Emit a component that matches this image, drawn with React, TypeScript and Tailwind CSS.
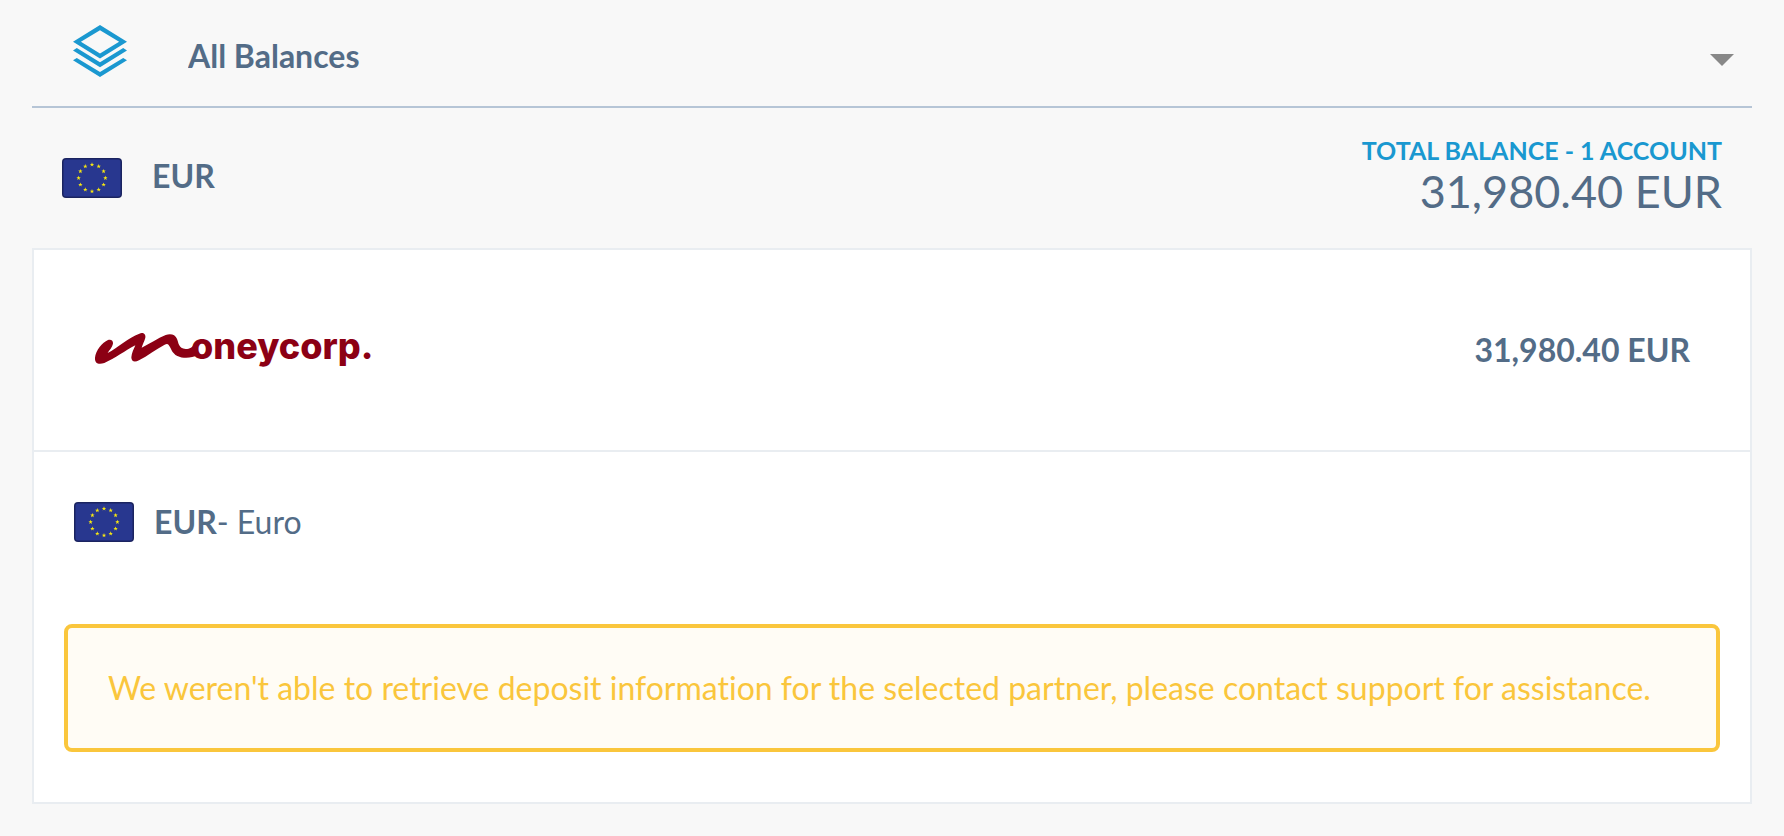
import React from "react";

const STARS = Array.from({ length: 12 }, (_, i) => {
  const a = (i * Math.PI) / 6;
  return { x: 30 + 13.4 * Math.sin(a), y: 20 - 13.4 * Math.cos(a) };
});

function EuFlag() {
  return (
    <svg viewBox="0 0 60 40" className="h-10 w-[60px] shrink-0" role="img" aria-label="European Union">
      <rect width="60" height="40" rx="4" fill="#1b2460" />
      <rect x="1.5" y="1.5" width="57" height="37" rx="2.5" fill="#28378f" />
      {STARS.map((s, i) => (
        <path
          key={i}
          transform={`translate(${s.x} ${s.y})`}
          d="M0-2.3 .6-.7 2.2-.7 .9.3 1.4 1.9 0 .9-1.4 1.9-.9.3-2.2-.7-.6-.7Z"
          fill="#f7e711"
        />
      ))}
    </svg>
  );
}

function LayersIcon() {
  return (
    <svg viewBox="0 0 54 52" className="h-[52px] w-[54px] shrink-0" fill="#1a98d0" aria-hidden="true">
      <path fillRule="evenodd" d="M27 0 54 16.7 27 33.4 0 16.7ZM27 5.2 7.9 16.7 27 28.4 46.1 16.7Z" />
      <path d="M0 25.4 3.8 23.1 27 37.2 50.2 23.1 54 25.4 27 42.3Z" />
      <path d="M0 35.2 3.8 32.9 27 47 50.2 32.9 54 35.2 27 52Z" />
    </svg>
  );
}

function MoneycorpLogo() {
  return (
    <svg viewBox="14 5 290 60" className="h-[60px] w-[290px]" fill="#8c0014" role="img" aria-label="moneycorp">
      <path
        transform="scale(.33333)"
        d="M45 128C47 107 67 82 84 75C93 72 100 77 99 86C97 97 88 105 83 114C112 98 145 69 178 56C189 51 198 58 196 68C193 80 188 87 185 98C208 87 233 70 257 60C272 54 286 59 290 70C296 82 295 102 317 102C330 102 336 96 346 87L352 121C337 129 310 132 292 123C276 115 273 99 266 90C264 86 259 86 254 89C228 102 203 123 177 136C164 143 154 140 154 127C155 113 162 102 166 91C136 106 105 131 73 144C56 149 44 146 45 128Z"
      />
      <text x="111" y="44" fontFamily="Inter" fontWeight="800" fontSize="36">
        oneycorp.
      </text>
    </svg>
  );
}

export default function App() {
  return (
    <main className="min-h-screen bg-[#f8f8f8] px-8 pb-8 font-['Lato',sans-serif] text-[32px] leading-10 text-[#536c87] [font-variant-ligatures:none]">
      <label className="flex h-[108px] items-center border-b-2 border-[#b6c5d6] pr-[18px] pb-1 pl-[41px]">
        <LayersIcon />
        <select
          aria-label="Balance view"
          className="h-full min-w-0 flex-1 appearance-none bg-transparent pt-2.5 pl-[61px] font-bold outline-none [font-variant-ligatures:none]"
        >
          <option>All Balances</option>
        </select>
        <svg viewBox="0 0 24 12" className="mt-[18px] h-3 w-6 shrink-0" fill="#888" aria-hidden="true">
          <path d="M0 0h24L12 12Z" />
        </svg>
      </label>

      <header className="flex h-[140px] items-center justify-between px-[30px]">
        <h2 className="flex items-center gap-[30px] font-bold">
          <EuFlag />
          <span className="pb-1">EUR</span>
        </h2>
        <div className="pb-1 text-right">
          <p className="text-[25px] leading-[30px] font-bold text-[#1a98d0]">TOTAL BALANCE - 1 ACCOUNT</p>
          <p className="text-[45px] leading-[52px]">31,980.40 EUR</p>
        </div>
      </header>

      <section className="border-2 border-[#e9edf1] bg-white">
        <div className="flex h-[202px] items-center justify-between border-b-2 border-[#e9edf1] px-[60px]">
          <MoneycorpLogo />
          <span className="font-bold">31,980.40 EUR</span>
        </div>
        <div className="px-[30px] pt-[50px] pb-[50px]">
          <h3 className="flex items-center gap-5 px-[10px]">
            <EuFlag />
            <span>
              <b className="font-bold">EUR</b>- Euro
            </span>
          </h3>
          <p
            role="alert"
            className="mt-[82px] rounded-lg border-4 border-[#fac63c] bg-[#fffcf5] px-10 py-10 text-[#fac63c]"
          >
            We weren't able to retrieve deposit information for the selected partner, please contact support for
            assistance.
          </p>
        </div>
      </section>
    </main>
  );
}
